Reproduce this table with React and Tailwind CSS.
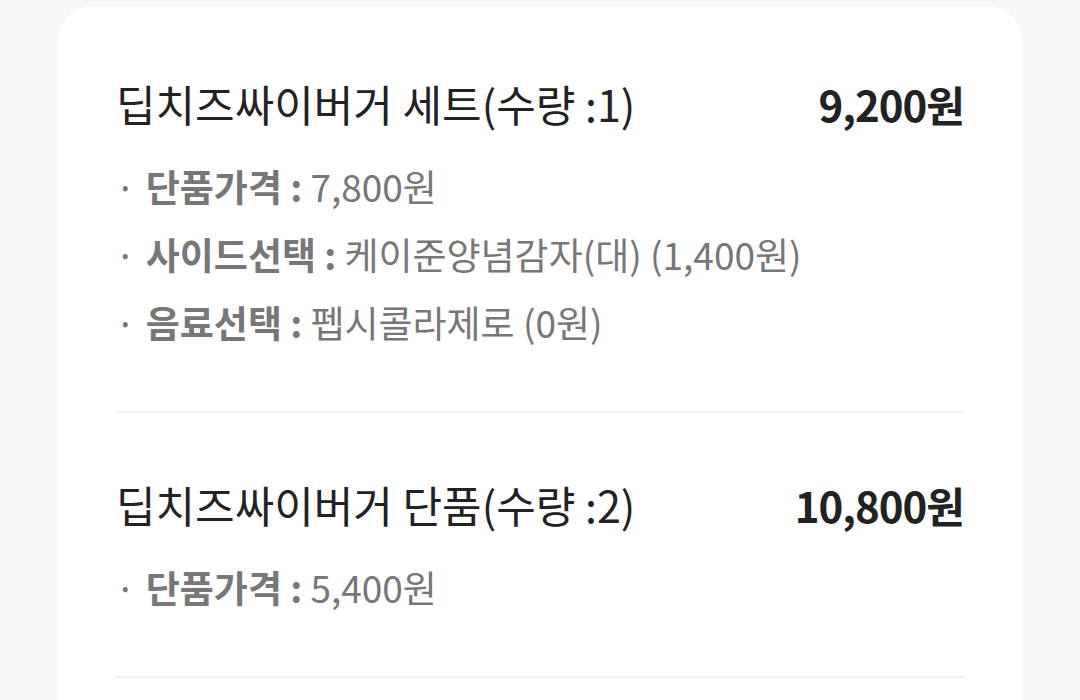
import React from "react";

const orders = [
  {
    name: "딥치즈싸이버거 세트(수량 :1)",
    price: "9,200원",
    options: [
      { label: "단품가격", value: "7,800원" },
      { label: "사이드선택", value: "케이준양념감자(대) (1,400원)" },
      { label: "음료선택", value: "펩시콜라제로 (0원)" },
    ],
  },
  {
    name: "딥치즈싸이버거 단품(수량 :2)",
    price: "10,800원",
    options: [{ label: "단품가격", value: "5,400원" }],
  },
];

const OrderItem = ({ item }) => {
  return (
    <div className="border-b-2 border-[#f2f2f2] pt-[67px] pb-[54px]">
      <div className="flex items-center justify-between h-[48px]">
        <p className="text-[43px] text-[#222]">{item.name}</p>
        <p className="text-[42px] font-semibold text-[#222] tracking-[-1px]">{item.price}</p>
      </div>
      <div className="mt-[26px] flex flex-col">
        {item.options.map((opt) => (
          <p key={opt.label} className="h-[68px] flex items-center text-[37px] text-[#777]">
            <span className="mr-[10px] ml-[-1px]">·</span>
            <span className="font-semibold">{opt.label} :</span>
            <span className="ml-[8px]">{opt.value}</span>
          </p>
        ))}
      </div>
    </div>
  );
};

export default function App() {
  return (
    <div
      className="w-[1080px] h-[700px] overflow-hidden bg-[#f7f7f9] pt-[7px] px-[58px]"
      style={{ fontFamily: '"Noto Sans CJK KR", "Noto Sans", sans-serif' }}
    >
      <div className="bg-white rounded-t-[32px] min-h-[800px] pt-[5px] px-[58px]">
        {orders.map((item) => (
          <OrderItem key={item.name} item={item} />
        ))}
      </div>
    </div>
  );
}
